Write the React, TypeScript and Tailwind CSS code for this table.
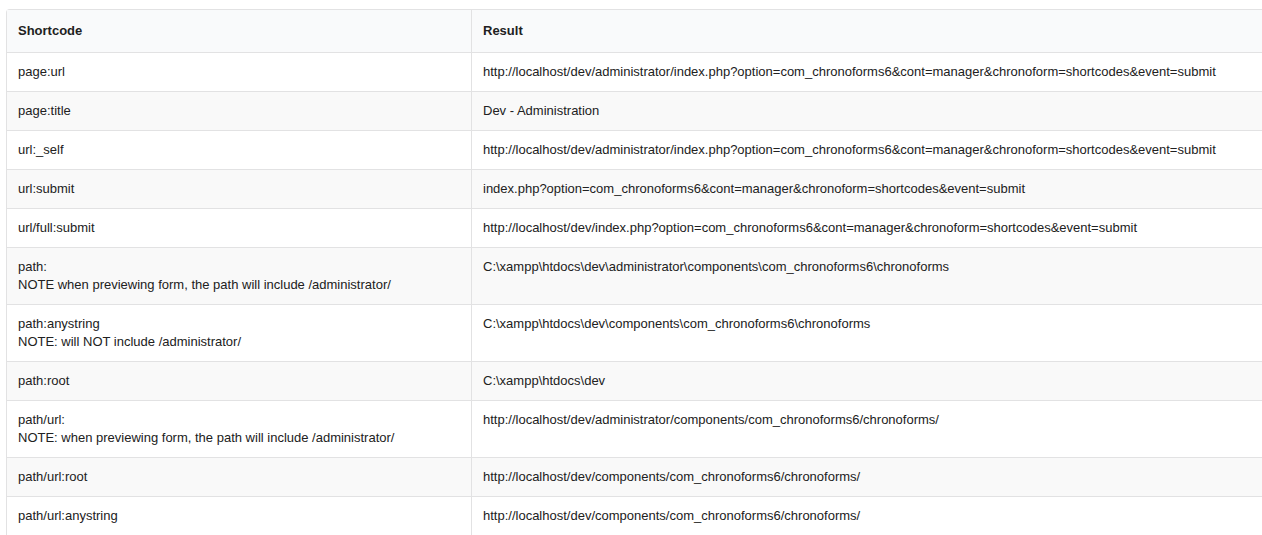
const rows: [string[], string][] = [
  [['page:url'], 'http://localhost/dev/administrator/index.php?option=com_chronoforms6&cont=manager&chronoform=shortcodes&event=submit'],
  [['page:title'], 'Dev - Administration'],
  [['url:_self'], 'http://localhost/dev/administrator/index.php?option=com_chronoforms6&cont=manager&chronoform=shortcodes&event=submit'],
  [['url:submit'], 'index.php?option=com_chronoforms6&cont=manager&chronoform=shortcodes&event=submit'],
  [['url/full:submit'], 'http://localhost/dev/index.php?option=com_chronoforms6&cont=manager&chronoform=shortcodes&event=submit'],
  [['path:', 'NOTE when previewing form, the path will include /administrator/'], 'C:\\xampp\\htdocs\\dev\\administrator\\components\\com_chronoforms6\\chronoforms'],
  [['path:anystring', 'NOTE: will NOT include /administrator/'], 'C:\\xampp\\htdocs\\dev\\components\\com_chronoforms6\\chronoforms'],
  [['path:root'], 'C:\\xampp\\htdocs\\dev'],
  [['path/url:', 'NOTE: when previewing form, the path will include /administrator/'], 'http://localhost/dev/administrator/components/com_chronoforms6/chronoforms/'],
  [['path/url:root'], 'http://localhost/dev/components/com_chronoforms6/chronoforms/'],
  [['path/url:anystring'], 'http://localhost/dev/components/com_chronoforms6/chronoforms/'],
]

export default function App() {
  return (
    <div className="h-[535px] overflow-hidden bg-white pt-[9px] pl-[6px] font-['Liberation_Sans',Arial,sans-serif] text-[13px] leading-[18px] text-[#212121]">
      <table className="w-[1300px] border-separate border-spacing-0 rounded-tl-[4px] border-t border-l border-[#e2e2e3]">
        <thead>
          <tr className="bg-[#f9fafb]">
            <th className="w-[465px] border-r border-b border-[#e2e2e3] px-[11px] py-[12px] text-left font-bold">Shortcode</th>
            <th className="border-b border-[#e2e2e3] px-[11px] py-[12px] text-left font-bold">Result</th>
          </tr>
        </thead>
        <tbody>
          {rows.map(([code, result], i) => (
            <tr key={i} className={i % 2 === 1 ? 'bg-[#f9f9f9]' : 'bg-white'}>
              <td className="border-r border-b border-[#e2e2e3] px-[11px] py-[10px] align-top">
                {code.map((line, j) => (
                  <div key={j}>{line}</div>
                ))}
              </td>
              <td className="border-b border-[#e2e2e3] px-[11px] py-[10px] align-top whitespace-nowrap">{result}</td>
            </tr>
          ))}
        </tbody>
      </table>
    </div>
  )
}
